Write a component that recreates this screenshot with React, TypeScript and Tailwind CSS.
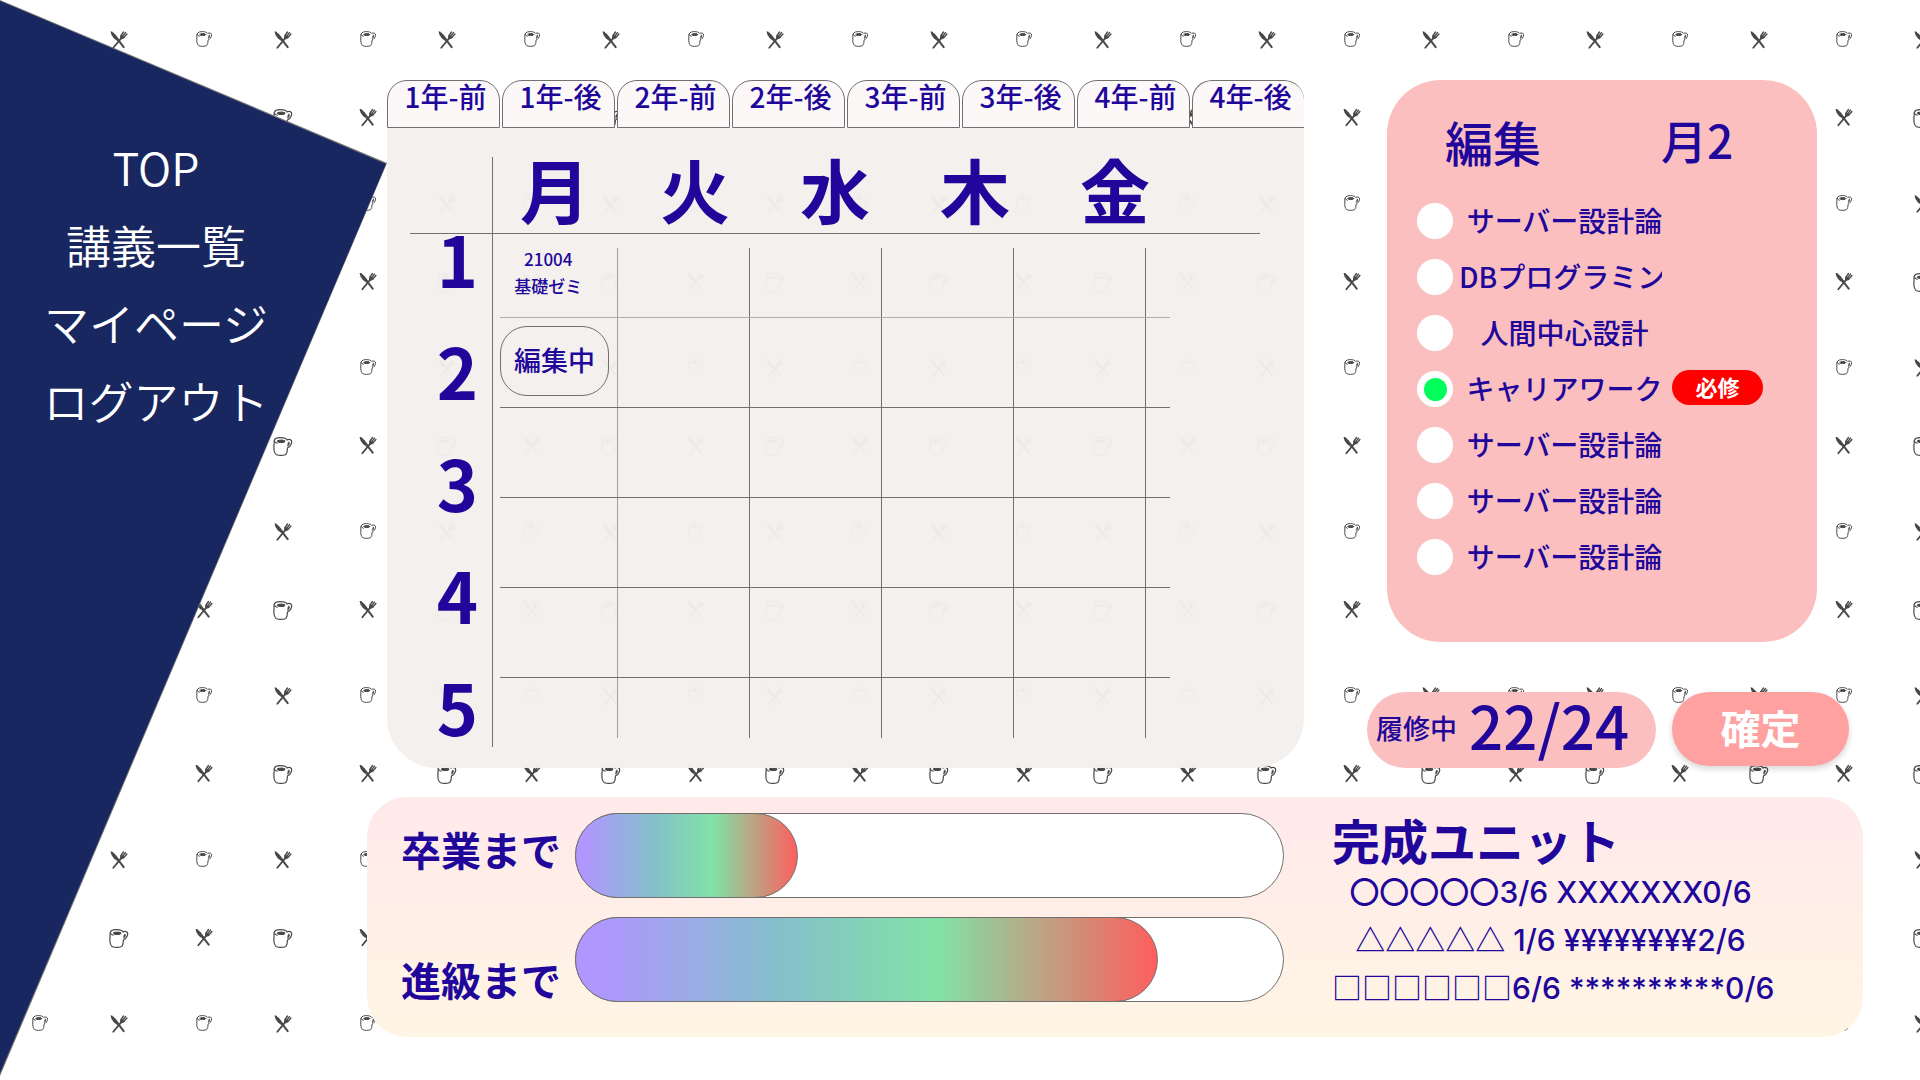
import { useState } from "react";

const TABS = ["1年-前", "1年-後", "2年-前", "2年-後", "3年-前", "3年-後", "4年-前", "4年-後"];
const DAYS = ["月", "火", "水", "木", "金"];
const PERIODS = [1, 2, 3, 4, 5];
const MENU = ["TOP", "講義一覧", "マイページ", "ログアウト"];
const COURSES = [
  { name: "サーバー設計論", required: false },
  { name: "DBプログラミング", required: false },
  { name: "人間中心設計", required: false },
  { name: "キャリアワーク", required: true },
  { name: "サーバー設計論", required: false },
  { name: "サーバー設計論", required: false },
  { name: "サーバー設計論", required: false },
];
const UNITS = [
  { mark: "〇〇〇〇〇", rest: "3/6 XXXXXXX0/6" },
  { mark: "△△△△△", rest: " 1/6 ¥¥¥¥¥¥¥¥2/6" },
  { mark: "□□□□□□", rest: "6/6 **********0/6" },
];

function Cutlery() {
  return (
    <g>
      <path d="M0 0.4 L1.6 0.4 L5.4 4 L8.6 8.2 L8.8 10 L7.2 10.2 L3.4 7.4 L1 4 Z" fill="#484848" />
      <path d="M7.8 9.2 L13.2 16.2" stroke="#484848" strokeWidth="2" strokeLinecap="round" />
      <path d="M2.8 16.8 L10.6 7.4" stroke="#484848" strokeWidth="1.8" strokeLinecap="round" />
      <path d="M9.4 8 L9.8 4.6 L11.2 4 L14 5.8 L13.4 7.6 L11 8.2 Z" fill="#484848" />
      <path d="M10.4 4.6 L13 1 M12.2 5.2 L15 1.6 M13.6 6.4 L16.4 3" fill="none" stroke="#484848" strokeWidth="1.4" strokeLinecap="round" />
    </g>
  );
}

function Mug() {
  return (
    <g fill="none" stroke="#484848" strokeWidth="1" strokeLinejoin="round" strokeLinecap="round">
      <path d="M1 3 C1.6 1 4.6 0.5 6.6 0.6 C9 0.7 11 1.2 11.6 2.4 C13.4 1.6 15.8 2 15.6 4.2 C15.2 6.6 13.6 8.4 12 9.2 C12 12 11.6 13.6 10.6 14.6 C8.6 15.6 4.6 15.6 2.6 14.6 C0.8 13.2 0.6 10 0.8 7.4 Z" />
      <ellipse cx="6.8" cy="3.6" rx="3" ry="1" fill="#484848" />
      <path d="M1.2 3.4 C1.6 4.6 2.6 5 3.4 5.2 M13.4 4.4 C12.6 5 12.4 6.4 12.4 7.4 C13.4 6.6 13.8 5.4 13.4 4.4 Z" />
    </g>
  );
}

function Wallpaper() {
  return (
    <svg className="absolute inset-0 h-full w-full" aria-hidden="true">
      <defs>
        <pattern id="cafe" width="164" height="164" patternUnits="userSpaceOnUse">
          <g transform="translate(110.5 31)"><Cutlery /></g>
          <g transform="translate(32 31)"><Mug /></g>
          <g transform="translate(31.5 108.5)"><Cutlery /></g>
          <g transform="translate(109 109) scale(1.2)"><Mug /></g>
        </pattern>
      </defs>
      <rect width="100%" height="100%" fill="url(#cafe)" />
    </svg>
  );
}

function Sidebar() {
  return (
    <aside className="relative w-[387px] shrink-0">
      <div className="absolute inset-0 bg-[#707070] [clip-path:polygon(0_0,387px_163px,0_1076px)]" />
      <div className="absolute inset-0 bg-[#182760] [clip-path:polygon(0_1px,386px_164px,0_1073px)]" />
      <nav className="relative flex w-[312px] flex-col items-center pt-32 text-[45px] leading-[78px] font-[350] text-white">
        {MENU.map((item) => (
          <a key={item} href="#" className="whitespace-nowrap">{item}</a>
        ))}
      </nav>
    </aside>
  );
}

function Timetable() {
  return (
    <table className="h-[490px] w-[670px] table-fixed border-collapse">
      <colgroup>
        <col className="w-[117px]" />
        <col className="w-[132px]" />
        <col className="w-[132px]" />
        <col className="w-[132px]" />
        <col className="w-[132px]" />
        <col />
      </colgroup>
      <tbody>
        {[0, 1, 2, 3, 4, 5].map((r) => (
          <tr key={r} className={r === 0 ? "h-[69px]" : r === 5 ? "h-[61px]" : "h-[90px]"}>
            {[0, 1, 2, 3, 4, 5].map((c) => (
              <td
                key={c}
                className={`p-0 align-top ${r < 5 ? "border-b" : ""} ${c < 5 ? "border-r" : ""} ${r === 0 ? "border-b-[#b0aeac]" : "border-b-[#707070]"} ${c === 0 ? "border-r-[#a0a0a0]" : "border-r-[#707070]"}`}
              >
                {r === 0 && c === 0 && (
                  <div className="-mt-[3px] pr-5 text-center text-[17px] leading-[27px] font-medium whitespace-nowrap">
                    <div>21004</div>
                    <div>基礎ゼミ</div>
                  </div>
                )}
                {r === 1 && c === 0 && (
                  <button className="mt-2 block h-[70px] w-[109px] rounded-[27px] border border-[#707070] pb-[2px] text-[27px] leading-[66px] font-medium whitespace-nowrap">
                    編集中
                  </button>
                )}
              </td>
            ))}
          </tr>
        ))}
      </tbody>
    </table>
  );
}

function Schedule() {
  return (
    <section className="flex min-w-0 flex-1 flex-col">
      <div className="flex gap-[2px]">
        {TABS.map((t) => (
          <button
            key={t}
            className="h-12 flex-1 rounded-t-[20px] border border-[#707070] bg-[#fcf8f8] pb-4 pl-1 text-[28px] leading-[30px] font-medium whitespace-nowrap last:border-r-0"
          >
            {t}
          </button>
        ))}
      </div>
      <div className="flex-1 rounded-b-[50px] bg-[#f3efec]/97 pt-[29px] pr-11 pb-[21px] pl-[23px]">
        <div className="flex h-[77px] border-b border-[#707070]">
          <div className="w-[83px] shrink-0 border-r border-[#707070]" />
          <div className="flex gap-[70px] pl-[27px] text-[70px] leading-[64px] font-bold">
            {DAYS.map((d) => (
              <span key={d}>{d}</span>
            ))}
          </div>
        </div>
        <div className="flex">
          <div className="flex w-[83px] shrink-0 flex-col items-center gap-16 border-r border-[#707070] pl-[13px] text-[70px] leading-[48px] font-bold">
            {PERIODS.map((p) => (
              <span key={p}>{p}</span>
            ))}
          </div>
          <div className="pt-[14px] pb-[9px] pl-[7px]">
            <Timetable />
          </div>
        </div>
      </div>
    </section>
  );
}

function Editor() {
  const [selected, setSelected] = useState(3);
  return (
    <section className="ml-5 h-[562px] w-[430px] rounded-[54px] bg-[#fbbfbf] pl-[30px]">
      <div className="flex h-[123px] gap-[120px] pt-7 pl-7 text-[48px] leading-[66px] font-medium">
        <h2>編集</h2>
        <p className="text-[46px] leading-[62px]">月2</p>
      </div>
      <ul className="flex flex-col gap-5">
        {COURSES.map((c, i) => (
          <li key={i} className="flex h-9 items-center">
            <label className="flex items-center gap-[6px]">
              <span className="grid size-9 shrink-0 place-items-center rounded-full bg-white">
                <input
                  type="radio"
                  name="course"
                  checked={selected === i}
                  onChange={() => setSelected(i)}
                  className="size-[23px] appearance-none rounded-full checked:bg-[#00ff5a]"
                />
              </span>
              <span className="block w-[203px] overflow-hidden pb-[2px] text-[28px] leading-[42px] font-medium whitespace-nowrap">
                <span className="block w-[211px] text-center">{c.name}</span>
              </span>
            </label>
            {c.required && (
              <span className="mb-[3px] ml-[10px] h-[35px] w-[91px] rounded-full bg-[#ff0000] text-center text-[22px] leading-[32px] font-bold text-white">
                必修
              </span>
            )}
          </li>
        ))}
      </ul>
    </section>
  );
}

function Gauge({ label, percent }: { label: string; percent: number }) {
  return (
    <div
      role="progressbar"
      aria-label={label}
      aria-valuenow={percent}
      className="h-[85px] rounded-[43px] border border-[#707070] bg-white"
    >
      <div
        className="-m-px h-[85px] rounded-[43px] border border-[#707070] bg-[linear-gradient(90deg,#b096ff_0%,#b096ff_4%,#86becd_34%,#81e2a6_62%,#ff5d5d_100%)] bg-origin-border"
        style={{ width: `${percent}%` }}
      />
    </div>
  );
}

export default function App() {
  return (
    <div
      lang="ja"
      className="relative flex min-h-screen overflow-hidden bg-white font-['Noto_Sans_CJK_JP',sans-serif] text-[#21069b]"
    >
      <Wallpaper />
      <Sidebar />
      <main className="relative min-w-0 flex-1 pt-20 pr-[57px]">
        <div className="mr-[14px] flex gap-[63px]">
          <Schedule />
          <div className="flex w-[482px] shrink-0 flex-col gap-[50px]">
            <Editor />
            <div className="flex justify-between">
              <div className="flex h-[76px] w-[289px] items-center gap-3 rounded-full bg-[#fbbfbf] pb-1 pl-[9px]">
                <span className="text-[27px] font-medium">履修中</span>
                <span className="pb-2 text-[60px] leading-[64px] font-medium">22/24</span>
              </div>
              <button className="h-[74px] w-[177px] rounded-full bg-[#ffa1a1] pb-1 text-[40px] leading-[66px] font-bold text-white shadow-[0_3px_6px_rgba(0,0,0,0.16)]">
                確定
              </button>
            </div>
          </div>
        </div>
        <section className="mt-[29px] -ml-5 flex h-60 rounded-[40px] bg-linear-to-b from-[#ffe9ea] to-[#fff5e4] pl-[34px]">
          <div className="flex w-[174px] shrink-0 flex-col gap-[70px] pt-[22px] text-[40px] leading-[60px] font-bold whitespace-nowrap">
            <p>卒業まで</p>
            <p>進級まで</p>
          </div>
          <div className="flex min-w-0 flex-1 flex-col gap-[19px] pt-4">
            <Gauge label="卒業まで" percent={31.5} />
            <Gauge label="進級まで" percent={82.5} />
          </div>
          <div className="mr-[94px] ml-12 w-[437px] shrink-0 pt-[7px] font-medium whitespace-nowrap">
            <h2 className="h-[62px] text-[48px] leading-[70px] font-bold">完成ユニット</h2>
            <div className="text-center font-['Inter','Noto_Sans_CJK_JP',sans-serif] text-[30px] leading-[48px]">
              {UNITS.map((u) => (
                <p key={u.mark} className="h-12 whitespace-pre">
                  <span className="font-['Noto_Sans_CJK_JP',sans-serif]">{u.mark}</span>
                  {u.rest}
                </p>
              ))}
            </div>
          </div>
        </section>
      </main>
    </div>
  );
}
